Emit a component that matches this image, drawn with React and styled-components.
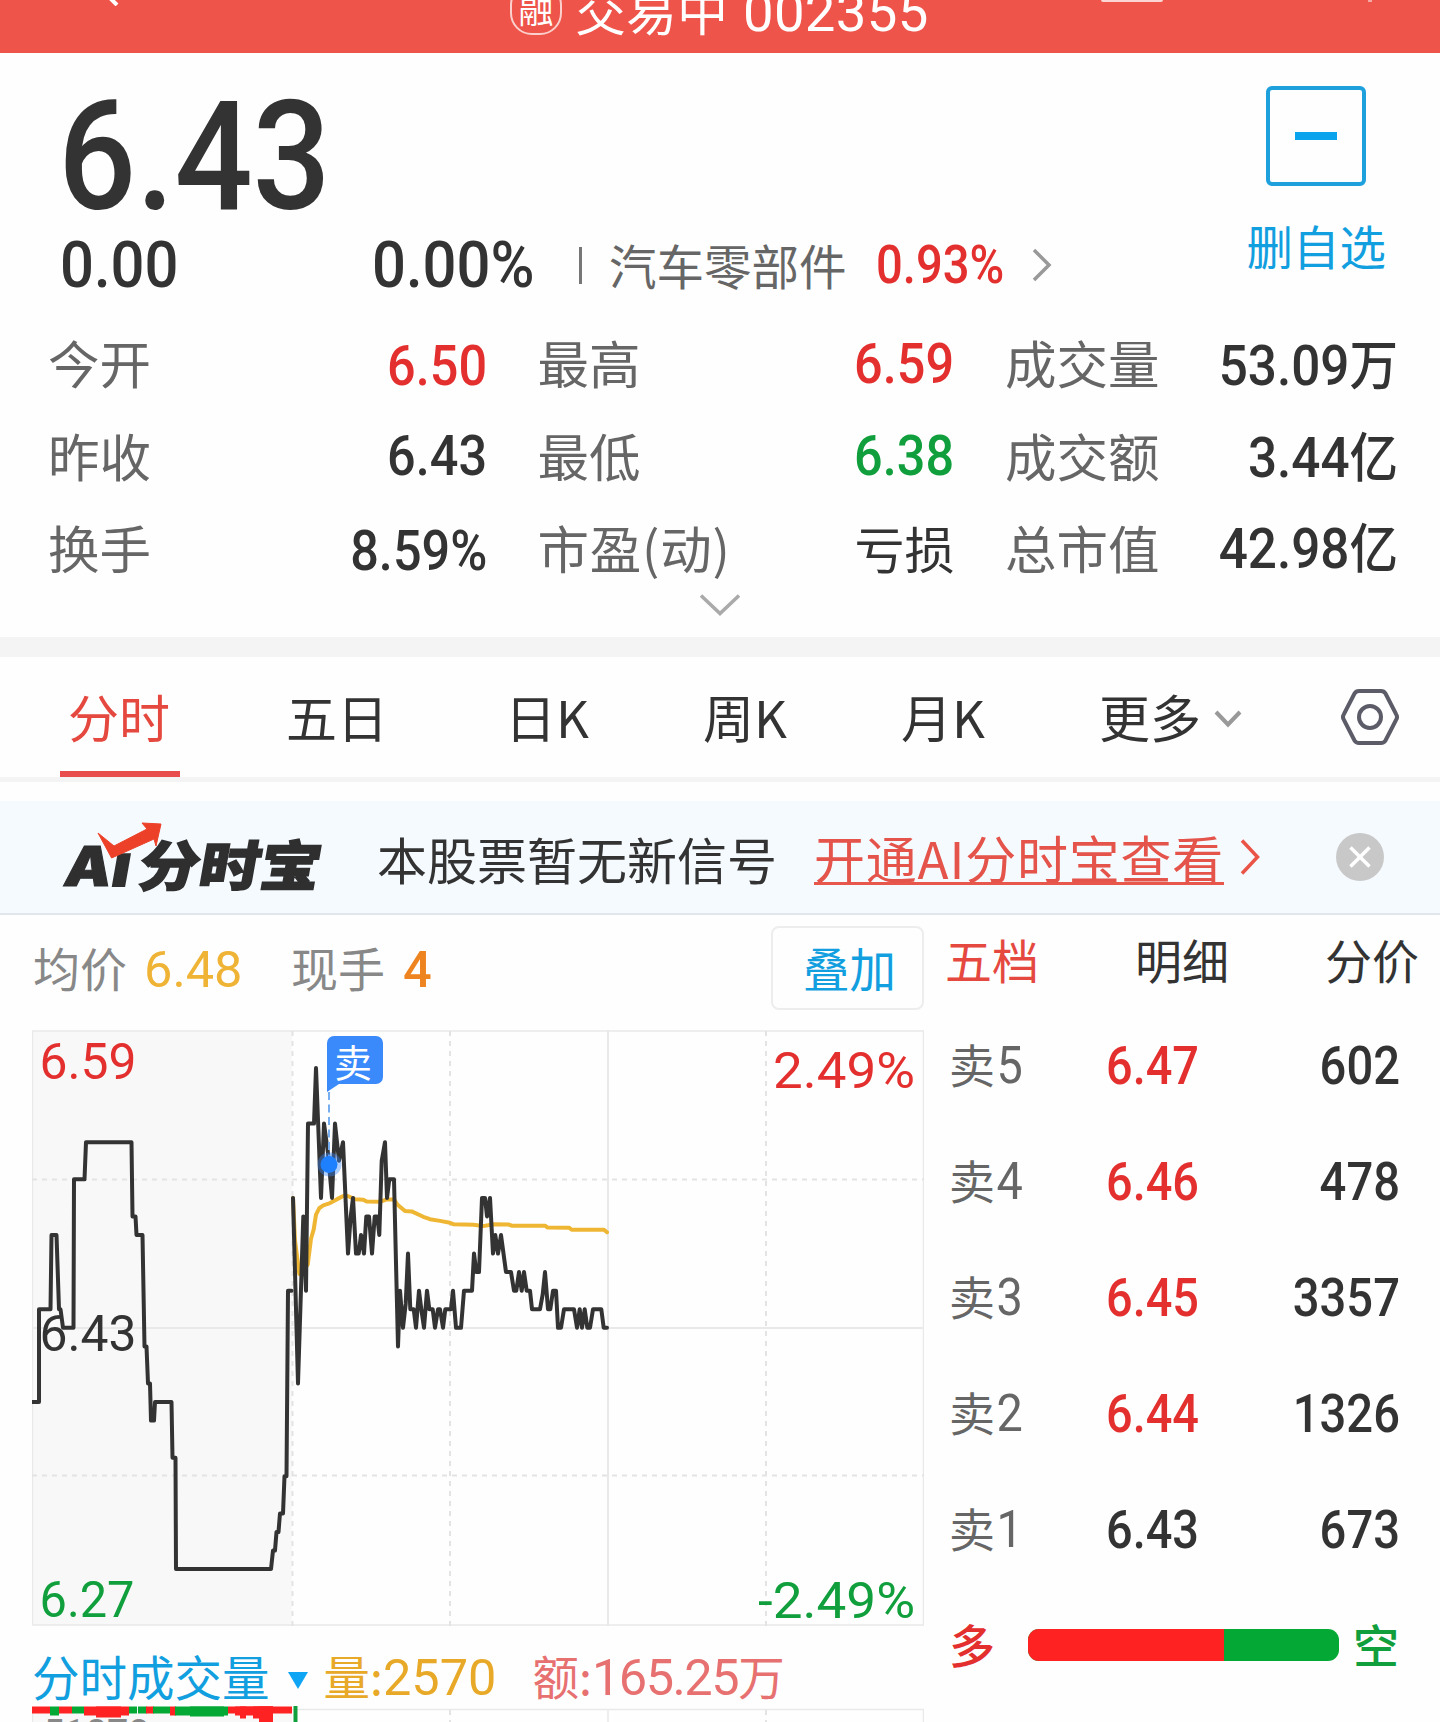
import React from "react";
import styled, { createGlobalStyle } from "styled-components";

const RED = "#e3302f";
const GREEN = "#109f3c";
const INK = "#333333";
const GREY = "#666666";
const BLUE = "#129fe0";

const STATS = [
  { label: "今开", value: "6.50", color: RED, drop: 8 },
  { label: "最高", value: "6.59", color: RED, drop: 4 },
  { label: "成交量", value: "53.09", unit: "万", drop: 8 },
  { label: "昨收", value: "6.43", drop: 4 },
  { label: "最低", value: "6.38", color: GREEN, drop: 4 },
  { label: "成交额", value: "3.44", unit: "亿", drop: 8 },
  { label: "换手", value: "8.59%", drop: 8 },
  { label: "市盈(动)", text: "亏损", spacing: 0.8 },
  { label: "总市值", value: "42.98", unit: "亿", drop: 4 },
];

const TABS = ["分时", "五日", "日K", "周K", "月K"];

const ASKS = [
  { level: "5", price: "6.47", volume: "602", color: RED },
  { level: "4", price: "6.46", volume: "478", color: RED },
  { level: "3", price: "6.45", volume: "3357", color: RED },
  { level: "2", price: "6.44", volume: "1326", color: RED },
  { level: "1", price: "6.43", volume: "673", color: INK },
];

// [x, cents above the previous close]
const AUCTION = [
  [0, -4], [7, -4], [7, 1], [18.5, 1], [19.5, 5], [24.5, 5], [27, 1], [28.5, 1],
  [31, 0], [41.5, 0], [42, 8], [52.5, 8], [54, 10], [99.5, 10], [100.5, 6],
  [103.5, 6], [104.5, 5], [110.5, 5], [112.5, -1], [114.5, -1], [116, -3],
  [118, -3], [119, -5], [122, -5], [123, -4], [139.5, -4], [140.5, -7],
  [143.5, -7], [144, -13], [239, -13], [241, -12], [243, -12], [244.5, -11],
  [246.5, -11], [248, -10], [251, -10], [252.5, -8], [254.5, -8], [256, 2],
  [259.5, 2],
];

// [thirds of a pixel, cents above the previous close]
const TRADES = [
  [39, 7], [54, -3], [70, 6], [78, 2], [84, 11], [102, 11], [108, 14], [123, 7],
  [132, 11], [144, 9.4], [156, 7], [165, 11], [177, 9], [189, 10], [204, 4],
  [212, 6], [219, 7], [228, 4], [236, 4], [243, 5], [252, 4], [259, 6],
  [267, 6], [276, 4], [284, 6], [292, 6], [298, 5], [305, 9], [315, 10],
  [321, 7], [328, 8], [342, 8], [354, -1], [360, 2], [369, 0], [377, 1.3],
  [384, 4], [391, 1], [401, 1], [408, 0], [417, 2], [424, 1], [432, 0],
  [441, 2], [448, 1], [458, 1], [465, 0], [474, 1], [480, 1], [489, 0],
  [496, 1], [513, 1], [519, 2], [528, 0], [543, 0], [552, 2], [576, 2],
  [582, 4], [589, 3], [597, 3], [606, 7], [615, 7], [621, 6], [630, 7],
  [639, 4], [646, 5], [654, 4], [663, 5], [678, 3], [693, 3], [702, 2],
  [709, 2], [717, 3], [725, 2], [732, 3], [740, 2], [750, 2], [756, 1],
  [780, 1], [788, 1.8], [795, 3], [804, 1], [811, 1], [819, 2], [828, 2],
  [834, 0], [843, 0], [852, 1], [882, 1], [891, 0], [899, 1], [906, 0],
  [914, 1], [922, 0], [930, 0], [939, 1], [964, 1], [971, 0], [981, 0],
];

const AVERAGE = [
  [39, 7], [45, 4.7], [58, 2.9], [83, 3.4], [93, 4.8], [101, 5.3], [108, 6.1],
  [118, 6.45], [130, 6.6], [150, 6.72], [170, 6.92], [190, 7.1], [203, 7.1],
  [225, 6.93], [250, 6.9], [260, 6.8], [300, 6.79], [320, 6.92], [342, 6.92],
  [352, 6.65], [375, 6.29], [395, 6.27], [430, 5.98], [450, 5.85], [480, 5.76],
  [510, 5.66], [520, 5.58], [580, 5.55], [610, 5.48], [640, 5.58], [685, 5.57],
  [695, 5.5], [795, 5.5], [803, 5.4], [868, 5.39], [875, 5.28], [972, 5.28],
  [981, 5.15],
];

const VOLUMES = [
  [0, 18, 7, "#ff2222"], [18, 9, 9, "#04a834"], [27, 13, 7, "#ff2222"],
  [40, 12, 7, "#04a834"], [52, 45, 9, "#ff2222"], [64, 25, 11, "#ff2222"],
  [97, 8, 7, "#04a834"], [106, 9, 7, "#04a834"], [114, 8, 7, "#ff2222"],
  [121, 17, 7, "#04a834"], [138, 6, 9, "#ff2222"], [143, 53, 9, "#04a834"],
  [158, 34, 10, "#04a834"], [196, 64, 7, "#ff2222"], [203, 38, 9, "#ff2222"],
  [208, 6, 12, "#ff2222"], [221, 20, 12, "#ff2222"], [227, 14, 16, "#ff2222"],
];

const priceY = (cents) => 297.8 - cents * 18.56;
const line = (data, x) =>
  data.map(([t, c]) => `${x(t).toFixed(1)},${priceY(c).toFixed(1)}`).join(" ");

function PriceChart() {
  return (
    <Plot width="892" height="596" viewBox="0 0 892 596">
      <rect x="1" y="1" width="259" height="594" fill="#f8f8f8" />
      <g stroke="#e9e9e9" strokeWidth="2" fill="none">
        <rect x="0.5" y="1" width="891" height="594" strokeWidth="1.5" />
        <path d="M0 298H892M576 0V596" />
        <path
          d="M0 149.5H892M0 445.5H892M260.5 1V596M418 1V596M734 1V596"
          strokeDasharray="5 5"
          stroke="#e3e3e3"
        />
      </g>
      <g fontFamily="Roboto" fontSize="50.5">
        <text x="7.5" y="49" fill={RED} textLength="97" lengthAdjust="spacingAndGlyphs">6.59</text>
        <text x="7.5" y="320.5" fill={INK} textLength="97" lengthAdjust="spacingAndGlyphs">6.43</text>
        <text x="7.5" y="587" fill={GREEN} textLength="95" lengthAdjust="spacingAndGlyphs">6.27</text>
        <text x="883" y="57.5" fill={RED} textAnchor="end" textLength="142" lengthAdjust="spacingAndGlyphs">2.49%</text>
        <text x="883" y="588" fill={GREEN} textAnchor="end" textLength="157" lengthAdjust="spacingAndGlyphs">-2.49%</text>
      </g>
      <g fill="none" strokeWidth="4" strokeLinejoin="round" strokeLinecap="round">
        <polyline stroke="#efb634" points={line(AVERAGE, (t) => 248 + t / 3)} />
        <polyline stroke={INK} points={line(AUCTION, (t) => t)} />
        <polyline stroke={INK} points={line(TRADES, (t) => 248 + t / 3)} />
      </g>
      <path d="M297 62V126" stroke="#76aef0" strokeWidth="2" strokeDasharray="8 4.5" />
      <circle cx="297.5" cy="134.5" r="12" fill="#3b8afb" opacity=".4" />
      <circle cx="297" cy="134.5" r="8.5" fill="#1f80ff" />
      <path
        d="M302 6H344a7 7 0 0 1 7 7V47a7 7 0 0 1-7 7H307L295 62V13a7 7 0 0 1 7-7z"
        fill="#3b8afb"
      />
      <text x="302" y="46.5" fontFamily="Noto Sans CJK SC" fontSize="38" fill="#fff">卖</text>
    </Plot>
  );
}

function VolumeChart() {
  return (
    <Plot width="892" height="16" viewBox="0 0 892 16">
      <rect x="1" y="4" width="259" height="12" fill="#f8f8f8" />
      <path d="M0.5 16V3.5H891.5V16M576 3V16" stroke="#e9e9e9" strokeWidth="1.5" fill="none" />
      <path d="M418 4V16M734 4V16" stroke="#e3e3e3" strokeWidth="2" strokeDasharray="5 5" />
      <text x="11" y="41" fontFamily="Roboto" fontSize="38" fill="#888">51873</text>
      {VOLUMES.map(([x, w, h, fill]) => (
        <rect key={`${x}-${h}`} x={x} y="0.5" width={w} height={h} fill={fill} />
      ))}
      <rect x="261.5" y="0" width="4" height="16" fill="#109f3c" />
    </Plot>
  );
}

function Logo() {
  return (
    <svg width="266" height="84" viewBox="0 0 266 84">
      <g fill="#2f2f2f" stroke="#2f2f2f" fontWeight="900">
        <g transform="translate(2 71) skewX(-10)" fontFamily="Inter">
          <text fontSize="55" textLength="47" lengthAdjust="spacingAndGlyphs" strokeWidth="1">A</text>
          <text x="48" fontSize="58" strokeWidth="2">ı</text>
        </g>
        <text
          transform="translate(76 71) skewX(-10)"
          fontFamily="Noto Sans CJK SC"
          fontSize="54"
          strokeWidth="1.5"
          textLength="182"
          lengthAdjust="spacingAndGlyphs"
        >
          分时宝
        </text>
      </g>
      <path
        d="M38 18L51.6 43L94 24L96 31L101 9L82 8L87 14L54 31z"
        fill="#ec4128"
        stroke="#ec4128"
        strokeWidth="1"
      />
    </svg>
  );
}

export default function App() {
  return (
    <Screen>
      <GlobalStyle />
      <Header>
        <BackTip width="14" height="6" viewBox="0 0 14 6">
          <path d="M2 -4L11 5" stroke="#fff" strokeWidth="4" />
        </BackTip>
        <Badge>融</Badge>
        <Title>交易中</Title>
        <Code>002355</Code>
        <Pill />
        <Speck />
      </Header>

      <Quote>
        <QuoteTop>
          <div>
            <Price>6.43</Price>
            <Change>
              <Num $size={65} $w={126}>0.00</Num>
              <Num $size={65} $w={186}>0.00%</Num>
              <Divider />
              <Cjk $size={47.5} $color={GREY}>汽车零部件</Cjk>
              <Sector $size={53} $color={RED}>0.93%</Sector>
              <svg width="20" height="34" viewBox="0 0 20 34">
                <path d="M2 2L17 17L2 32" fill="none" stroke="#999" strokeWidth="3.5" />
              </svg>
            </Change>
          </div>
          <Watch>
            <MinusBox><Minus /></MinusBox>
            <Cjk $size={46.5} $color={BLUE}>删自选</Cjk>
          </Watch>
        </QuoteTop>
        <Stats>
          {STATS.map((s) => (
            <Stat key={s.label}>
              <Cjk $size={51.5} $color={GREY} $spacing={s.spacing}>{s.label}</Cjk>
              {s.text ? (
                <Cjk $size={50}>{s.text}</Cjk>
              ) : (
                <StatValue $color={s.color} $drop={s.drop} $wide={!!s.unit}>
                  {s.value}
                  {s.unit && <Unit>{s.unit}</Unit>}
                </StatValue>
              )}
            </Stat>
          ))}
        </Stats>
        <Expand width="40" height="22" viewBox="0 0 40 22">
          <path d="M1 1.5L20 19.5L39 1.5" fill="none" stroke="#aaa" strokeWidth="3.5" />
        </Expand>
      </Quote>

      <Tabs>
        {TABS.map((t, i) => (
          <Tab key={t} $active={i === 0}>{t}</Tab>
        ))}
        <Tab>
          更多
          <MoreArrow width="28" height="18" viewBox="0 0 28 18">
            <path d="M2 2L14 14.5L26 2" fill="none" stroke="#999" strokeWidth="4" />
          </MoreArrow>
        </Tab>
        <svg width="58" height="56" viewBox="0 0 58 56">
          <g fill="none" stroke="#5c5c68" strokeWidth="4">
            <path d="M18 2H40Q43 2 44.500 4.500L55 25Q57 28 55 31L44.500 51.500Q43 54 40 54H18Q15 54 13.500 51.500L3 31Q1 28 3 25L13.500 4.500Q15 2 18 2z" />
            <circle cx="29" cy="28" r="11" />
          </g>
        </svg>
      </Tabs>

      <Banner>
        <Logo />
        <Message>本股票暂无新信号</Message>
        <Link>开通AI分时宝查看</Link>
        <svg width="20" height="36" viewBox="0 0 20 36">
          <path d="M2 1.500L17.500 18L2 34.500" fill="none" stroke="#ea5548" strokeWidth="3.5" />
        </svg>
        <Close width="48" height="48" viewBox="0 0 48 48">
          <circle cx="24" cy="24" r="24" fill="#c8c8c8" />
          <path d="M14.500 14.500L33.500 33.500M33.500 14.500L14.500 33.500" stroke="#fff" strokeWidth="3.5" />
        </Close>
      </Banner>

      <Main>
        <ChartColumn>
          <Summary>
            <Cjk $size={47} $color="#888">均价</Cjk>
            <Average $size={50.5} $weight={400} $color="#efb336">6.48</Average>
            <Cjk $size={47} $color="#888">现手</Cjk>
            <Lots $size={50.5} $weight={500} $color="#ee8420">4</Lots>
            <Overlay>叠加</Overlay>
          </Summary>
          <PriceChart />
          <VolumeInfo>
            <Cjk $size={47.5} $color={BLUE}>分时成交量</Cjk>
            <Triangle width="20" height="17" viewBox="0 0 20 17">
              <path d="M0 0H20L10 17z" fill="#0ea5f5" />
            </Triangle>
            <Figure $color="#e8a928">量:<b>2570</b></Figure>
            <Figure $color="#e77070" $tight>额:<b>165.25</b>万</Figure>
          </VolumeInfo>
          <VolumeChart />
        </ChartColumn>

        <Depth>
          <DepthTabs>
            <Cjk $size={47} $color="#e5483f">五档</Cjk>
            <Cjk $size={47}>明细</Cjk>
            <Cjk $size={47}>分价</Cjk>
          </DepthTabs>
          {ASKS.map((a) => (
            <Ask key={a.level}>
              <Level>卖<b>{a.level}</b></Level>
              <AskPrice $color={a.color}>{a.price}</AskPrice>
              <AskVolume>{a.volume}</AskVolume>
            </Ask>
          ))}
          <Balance>
            <Side $size={46} $weight={500} $color={RED}>多</Side>
            <Meter><Bulls /></Meter>
            <Side $size={46} $weight={500} $color={GREEN}>空</Side>
          </Balance>
        </Depth>
      </Main>
    </Screen>
  );
}

const GlobalStyle = createGlobalStyle`
  body {
    margin: 0;
    background: #fefefe;
  }
  b {
    font-weight: inherit;
  }
  svg {
    display: block;
    flex: none;
  }
`;

const Screen = styled.div`
  width: 1440px;
  height: 1722px;
  overflow: hidden;
  background: #fefefe;
  color: ${INK};
  font-family: "Noto Sans CJK SC", sans-serif;
`;

const Cjk = styled.span`
  font-size: ${(p) => p.$size}px;
  font-weight: ${(p) => p.$weight || 400};
  color: ${(p) => p.$color || INK};
  letter-spacing: ${(p) => p.$spacing || 0}px;
  line-height: 1;
  white-space: nowrap;
`;

const Num = styled.span`
  width: ${(p) => (p.$w ? `${p.$w}px` : "auto")};
  font-family: Roboto, "Noto Sans CJK SC", sans-serif;
  font-size: ${(p) => p.$size}px;
  font-weight: ${(p) => p.$weight || 500};
  color: ${(p) => p.$color || INK};
  line-height: 1;
  white-space: nowrap;
`;

const Header = styled.header`
  display: flex;
  align-items: flex-start;
  height: 53px;
  overflow: hidden;
  background: #ee544a;
  color: #fff;
  line-height: 51px;
  white-space: nowrap;
`;

const BackTip = styled.svg`
  margin-left: 106px;
`;

const Badge = styled.div`
  box-sizing: border-box;
  width: 52px;
  height: 52px;
  margin: -17px 0 0 390px;
  border: 2px solid #fbd0cc;
  border-radius: 22px;
  font-size: 35px;
  line-height: 45px;
  text-align: center;
`;

const Title = styled.div`
  margin: -16px 0 0 13px;
  font-size: 51px;
`;

const Code = styled.div`
  width: 184px;
  margin: -13px 0 0 15px;
  font-family: Roboto, sans-serif;
  font-size: 54.5px;
  letter-spacing: 0.3px;
`;

const Pill = styled.div`
  width: 62px;
  height: 2px;
  margin-left: 174px;
  border-radius: 0 0 2px 2px;
  background: #fbd5d2;
`;

const Speck = styled.div`
  width: 4px;
  height: 2px;
  margin-left: 205px;
  background: #f6a9a4;
`;

const Quote = styled.section`
  height: 584px;
  box-sizing: border-box;
  padding-top: 27px;
`;

const QuoteTop = styled.div`
  display: flex;
  justify-content: space-between;
  height: 236px;
  padding: 0 54px 0 57px;
`;

const Price = styled.div`
  margin-left: 1px;
  font-family: Roboto, sans-serif;
  font-size: 152px;
  font-weight: 500;
  line-height: 155px;
  transform: scaleX(0.905);
  transform-origin: left;
`;

const Change = styled.div`
  display: flex;
  align-items: center;
  height: 60px;

  ${Num} {
    transform: scaleX(0.92);
    transform-origin: left;
  }
  ${Num}:first-child {
    margin: 0 186px 0 3px;
  }
`;

const Divider = styled.div`
  width: 3px;
  height: 37px;
  margin: 0 27px 0 21px;
  background: #777;
`;

const Sector = styled(Num)`
  width: 126px;
  margin: 0 30px 0 29px;

  && {
    transform: scaleX(0.89);
  }
`;

const Watch = styled.div`
  display: flex;
  flex-direction: column;
  align-items: center;
  gap: 36px;
  padding-top: 6px;
`;

const MinusBox = styled.div`
  display: flex;
  align-items: center;
  justify-content: center;
  box-sizing: border-box;
  width: 100px;
  height: 100px;
  border: 4px solid #1ea0dc;
  border-radius: 6px;
`;

const Minus = styled.div`
  width: 42px;
  height: 8px;
  background: #0aa3ee;
`;

const Stats = styled.div`
  display: grid;
  grid-template-columns: 439px 417px 393px;
  grid-auto-rows: 92.3px;
  column-gap: 50.5px;
  padding-left: 48px;
`;

const Stat = styled.div`
  display: flex;
  align-items: center;
  justify-content: space-between;
`;

const StatValue = styled(Num).attrs({ $size: 56 })`
  padding-top: ${(p) => p.$drop}px;
  transform: scaleX(${(p) => (p.$wide ? 0.915 : 0.9)});
  transform-origin: right;
`;

const Unit = styled.span`
  font-size: 53px;
  line-height: 0;
`;

const Expand = styled.svg`
  margin: 1px auto 0;
`;

const Tabs = styled.nav`
  display: grid;
  grid-template-columns: 226px 219px 198px 198px 198px 242px 58px;
  align-items: center;
  height: 120px;
  padding-left: 60px;
  border-top: 20px solid #f4f4f4;
  border-bottom: 5px solid #f4f4f4;
`;

const Tab = styled.div`
  display: flex;
  align-items: center;
  gap: 13px;
  box-sizing: border-box;
  height: 120px;
  width: ${(p) => (p.$active ? "120px" : "auto")};
  padding: ${(p) => (p.$active ? "5px 8px 0" : "0 0 1px")};
  border-bottom: ${(p) => (p.$active ? "6px solid #e84c4c" : "0")};
  color: ${(p) => (p.$active ? "#e5483f" : INK)};
  font-size: 51px;
  line-height: 1;
  white-space: nowrap;
`;

const MoreArrow = styled.svg`
  margin-top: 4px;
`;

const Banner = styled.section`
  display: flex;
  align-items: center;
  height: 112px;
  margin-top: 19px;
  padding-left: 60px;
  border-bottom: 2px solid #e0e6eb;
  background: #f5faff;
`;

const Message = styled.div`
  width: 437px;
  margin-left: 51px;
  padding-top: 2px;
  font-size: 50px;
  line-height: 1;
  white-space: nowrap;
`;

const Link = styled.div`
  width: 410px;
  padding-top: 3px;
  margin-right: 16px;
  border-bottom: 3px solid #e8574c;
  color: #e4544a;
  font-size: 51px;
  letter-spacing: 0.8px;
  line-height: 50px;
  white-space: nowrap;
`;

const Close = styled.svg`
  margin-left: 76px;
`;

const Main = styled.main`
  display: flex;
`;

const ChartColumn = styled.div`
  width: 924px;
`;

const Plot = styled.svg`
  margin-left: 32px;
`;

const Summary = styled.div`
  display: flex;
  align-items: center;
  height: 84px;
  padding: 11px 0 20px 33px;

  > ${Cjk} {
    padding-bottom: 3px;
  }
`;

const Average = styled(Num)`
  width: 147px;
  margin-left: 17px;
  padding-top: 4px;
`;

const Lots = styled(Num)`
  margin-left: 18px;
  padding-top: 4px;
`;

const Overlay = styled.div`
  box-sizing: border-box;
  width: 153px;
  height: 84px;
  padding-left: 4px;
  margin-left: auto;
  border: 2px solid #ededed;
  border-radius: 8px;
  color: ${BLUE};
  font-size: 46.5px;
  line-height: 78px;
  text-align: center;
`;

const VolumeInfo = styled.div`
  display: flex;
  align-items: center;
  height: 61px;
  padding: 19px 0 0 32px;
`;

const Triangle = styled.svg`
  margin: 10px 16px 0 18px;
`;

const Figure = styled.div`
  margin-right: 36px;
  color: ${(p) => p.$color};
  font-size: 46.5px;
  line-height: 1;
  white-space: nowrap;

  b {
    font-family: Roboto, sans-serif;
    font-size: 50.5px;
    letter-spacing: ${(p) => (p.$tight ? "-1.5px" : "0")};
    line-height: 0;
  }
`;

const Depth = styled.div`
  width: 516px;
`;

const DepthTabs = styled.div`
  display: flex;
  align-items: center;
  justify-content: space-between;
  height: 86px;
  margin-bottom: 5px;
  padding: 0 21px 0 21px;
`;

const Ask = styled.div`
  display: grid;
  grid-template-columns: 157px 110px 1fr;
  align-items: center;
  height: 116px;
  padding: 0 40px 0 25px;
`;

const Level = styled.div`
  padding-bottom: 2px;
  color: ${GREY};
  font-size: 46px;
  line-height: 1;

  b {
    display: inline-block;
    font-family: Roboto, sans-serif;
    font-size: 52px;
    line-height: 0;
    transform: scaleX(0.9);
  }
`;

const AskPrice = styled(Num).attrs({ $size: 53 })`
  padding-top: 4px;
  transform: scaleX(0.885);
  transform-origin: left;
`;

const AskVolume = styled(Num).attrs({ $size: 53 })`
  padding-top: 4px;
  text-align: right;
  transform: scaleX(0.89);
  transform-origin: right;
`;

const Balance = styled.div`
  display: flex;
  align-items: center;
  justify-content: space-between;
  height: 117px;
  padding: 0 41px 0 25px;
`;

const Side = styled(Cjk)`
  padding-bottom: 4px;
`;

const Meter = styled.div`
  width: 311px;
  height: 32px;
  margin-left: 18px;
  overflow: hidden;
  border-radius: 11px;
  background: #04a834;
`;

const Bulls = styled.div`
  width: 196px;
  height: 32px;
  background: #ff2222;
`;
